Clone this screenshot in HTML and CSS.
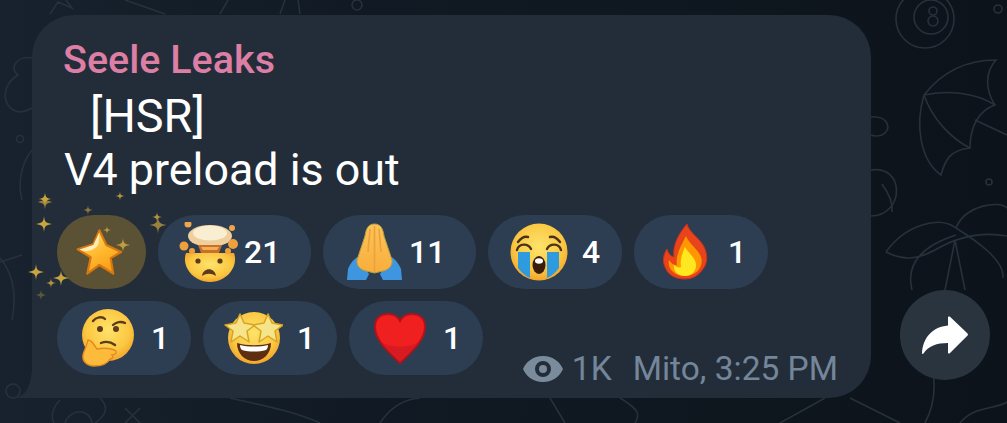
FILE: index.html
```html
<!DOCTYPE html>
<html lang="en">
<head>
    <meta charset="UTF-8">
    <meta name="viewport" content="width=device-width, initial-scale=1.0">
    <title>Seele Leaks</title>
    <link rel="stylesheet" href="styles.css">
</head>
<body>
    <!-- chat wallpaper doodles -->
    <svg class="doodles" viewBox="0 0 1007 423" aria-hidden="true">
        <g fill="none" stroke="#27313b" stroke-width="1.6">
            <circle cx="925" cy="19" r="29"/><circle cx="931" cy="17" r="17"/>
            <circle cx="933" cy="11" r="4"/><circle cx="933" cy="21" r="5"/>
            <circle cx="998" cy="9" r="4"/><circle cx="989" cy="182" r="3"/>
            <path d="M924 95C945 68 970 60 996 60C985 72 985 90 995 105C980 110 970 125 970 148C950 150 945 160 941 175C920 160 915 125 924 95Z"/>
            <path d="M924 95C945 90 975 92 995 105M924 95C932 118 950 138 970 148M975 120L1007 135"/>
            <path d="M871 117C888 115 893 130 882 135Q876 137 871 135M871 170C905 165 905 215 871 216M882 184C890 195 893 205 892 212"/>
            <path d="M886 252C905 225 940 215 956 228C965 205 1000 200 1007 208M886 252C905 262 920 258 935 250C960 235 985 232 1007 236M956 228C975 240 1005 260 1003 278M912 290C905 262 925 245 956 235M955 240L945 290M955 240L965 290"/>
            <path d="M32 58C18 55 8 68 18 75C6 82 2 95 8 105C15 115 25 112 32 108"/>
            <path d="M32 150C20 165 18 185 22 200"/><circle cx="20" cy="139" r="3.5"/>
            <path d="M0 258C10 270 18 290 12 320M0 262L22 255"/>
            <path d="M50 14L58 2L72 8L66 0M125 0L165 14M220 14L228 0M280 14L285 0M300 14L298 0"/>
            <circle cx="357" cy="5" r="5"/>
            <circle cx="13" cy="391" r="7"/>
            <path d="M60 400C50 410 52 420 54 423M100 398C110 408 105 416 95 423M65 423C70 408 90 408 92 423M125 408L140 423M140 408L125 423"/>
            <path d="M550 398L565 423M620 398C640 410 640 415 635 423M780 423L825 398M850 398L900 423"/>
            <path d="M920 340C935 360 940 395 925 423M960 423C975 405 995 410 1007 402"/>
            <path d="M230 398C260 405 290 410 320 423M380 423Q395 400 420 398"/>
        </g>
    </svg>

    <main class="row">
        <article class="bubble">
            <h2 class="author">Seele Leaks</h2>
            <p class="line line-indent">[HSR]</p>
            <p class="line">V4 preload is out</p>

            <div class="reactions">
                <div class="pill pill-active">
                    <svg class="emoji" viewBox="0 0 60 60"><use href="#e-star"/></svg>
                </div>
                <div class="pill">
                    <svg class="emoji" viewBox="0 0 60 60"><use href="#e-head"/></svg>
                    <span class="count">21</span>
                </div>
                <div class="pill">
                    <svg class="emoji" viewBox="0 0 60 60"><use href="#e-pray"/></svg>
                    <span class="count">11</span>
                </div>
                <div class="pill">
                    <svg class="emoji" viewBox="0 0 60 60"><use href="#e-cry"/></svg>
                    <span class="count count-single">4</span>
                </div>
                <div class="pill">
                    <svg class="emoji" viewBox="0 0 60 60"><use href="#e-fire"/></svg>
                    <span class="count count-single">1</span>
                </div>
                <div class="pill">
                    <svg class="emoji" viewBox="0 0 60 60"><use href="#e-think"/></svg>
                    <span class="count count-single">1</span>
                </div>
                <div class="pill">
                    <svg class="emoji" viewBox="0 0 60 60"><use href="#e-stars"/></svg>
                    <span class="count count-single">1</span>
                </div>
                <div class="pill">
                    <svg class="emoji" viewBox="0 0 60 60"><use href="#e-heart"/></svg>
                    <span class="count count-single">1</span>
                </div>
            </div>

            <div class="meta">
                <svg class="eye" viewBox="0 0 40 26"><path fill-rule="evenodd" fill="#7a8b9c" d="M20 0C30 0 37 6 40 13C37 20 30 26 20 26C10 26 3 20 0 13C3 6 10 0 20 0ZM20 5A8 8 0 1 0 20 21A8 8 0 1 0 20 5ZM20 9A4 4 0 1 1 20 17A4 4 0 1 1 20 9Z"/></svg>
                <span class="views">1K</span>
                <span>Mito, 3:25 PM</span>
            </div>

            <!-- sparkle effect round the paid star reaction -->
            <svg class="sparkles" viewBox="0 0 140 120" aria-hidden="true">
                <g fill="#c9a53f">
                    <use href="#spark" transform="translate(25 17) scale(.65)"/>
                    <use href="#spark" transform="translate(25 20) scale(.75)" opacity=".7"/>
                    <use href="#spark" transform="translate(24 42) scale(.8)"/>
                    <use href="#spark" transform="translate(100 14) scale(.45)" opacity=".85"/>
                    <use href="#spark" transform="translate(68 28) scale(.5)" opacity=".6"/>
                    <use href="#spark" transform="translate(137 35) scale(.5)" opacity=".85"/>
                    <use href="#spark" transform="translate(138 43) scale(.85)" opacity=".7"/>
                    <use href="#spark" transform="translate(16 90) scale(.8)"/>
                    <use href="#spark" transform="translate(31 101) scale(.5)" opacity=".85"/>
                    <use href="#spark" transform="translate(41 96) scale(.8)"/>
                    <use href="#spark" transform="translate(21 113) scale(.55)" opacity=".35"/>
                    <use href="#spark" transform="translate(87 48) scale(.4)" opacity=".85"/>
                    <use href="#spark" transform="translate(103 63) scale(.7)" opacity=".9"/>
                </g>
            </svg>
        </article>

        <button class="share" aria-label="Forward">
            <svg viewBox="0 0 46 38" width="46" height="38"><path fill="#fff" d="M26 1.5C26 .5 27 0 28 .8L45.3 17.2C46.2 18 46.2 19 45.3 19.8L28 37C27 38 26 37.5 26 36.5V27C15 27 6 30 1.5 37.5C.8 38.3 0 38 0 37C1 22 10 11 26 9.5Z"/></svg>
        </button>
    </main>

    <!-- emoji drawings -->
    <svg class="sprite" aria-hidden="true">
        <defs>
            <path id="spark" d="M0-10C.8-3 1.5-1.5 10 0C1.5 1.5 .8 3 0 10C-.8 3-1.5 1.5-10 0C-1.5-1.5-.8-3 0-10Z"/>
            <radialGradient id="face" cx=".5" cy=".4" r=".6">
                <stop offset="0" stop-color="#fde36b"/><stop offset=".7" stop-color="#fbc741"/><stop offset="1" stop-color="#f3a52c"/>
            </radialGradient>
            <linearGradient id="starFill" x1=".2" y1=".1" x2=".7" y2="1">
                <stop offset="0" stop-color="#ffd76a"/><stop offset=".5" stop-color="#ffb92e"/><stop offset="1" stop-color="#f79a14"/>
            </linearGradient>
            <linearGradient id="palm" x1="0" y1="0" x2="0" y2="1">
                <stop offset="0" stop-color="#fbc557"/><stop offset="1" stop-color="#f8ae3c"/>
            </linearGradient>

            <g id="e-star">
                <path fill="url(#starFill)" stroke="#d8760f" stroke-width="2.5" stroke-linejoin="round" d="M27 5L35 22L52 30L40 37L43 55L27 45L13 55L17 36L2 27L20 21Z"/>
                <path fill="#ffedb5" d="M4 27L20 22L27 7L26 20C24 28 12 31 4 27Z"/>
            </g>

            <g id="e-head">
                <path fill="url(#face)" d="M8 31H56C58 36 57 42 55 46C50 56 40 60 32 60C24 60 14 56 9 46C7 42 6 36 8 31Z"/>
                <ellipse cx="32" cy="14" rx="22" ry="11" fill="#efcf9c"/>
                <ellipse cx="32" cy="11" rx="17" ry="7.5" fill="#f9edd2"/>
                <path fill="#c8702e" d="M20 23H44L41 31H23Z"/>
                <path fill="#f2b04e" d="M23 25H41L39 28H25Z"/>
                <circle cx="10" cy="2" r="3.5" fill="#eda64c"/><circle cx="54" cy="6" r="3" fill="#eda64c"/>
                <circle cx="6" cy="24" r="4.5" fill="#eda03c"/><circle cx="55" cy="22" r="5" fill="#eda03c"/>
                <circle cx="14" cy="29" r="3" fill="#eda03c"/><circle cx="50" cy="29" r="3" fill="#eda03c"/>
                <circle cx="20" cy="39" r="2.6" fill="#5d3a1a"/><circle cx="42" cy="39" r="2.6" fill="#5d3a1a"/>
                <path fill="#5d3a1a" d="M24 54C25 45 37 45 38 54C33 51 29 51 24 54Z"/>
            </g>

            <g id="e-pray">
                <path fill="#3f96e0" d="M4 58L5 47C8 40 12 36 15 35L26 52L23 58ZM59 58L58 47C55 40 51 36 48 35L37 52L40 58Z"/>
                <path fill="url(#palm)" stroke="#b89c3f" stroke-width="1" d="M31.5 2C25 2 23 7 22 14L14 38C13 44 18 48 23 49L31.5 51L40 49C45 48 50 44 49 38L41 14C40 7 38 2 31.5 2Z"/>
                <path stroke="#ee9f3e" stroke-width="1.6" fill="none" d="M31.5 4V50M27 7L25 30M36 7L38 30"/>
            </g>

            <g id="e-cry">
                <circle cx="31" cy="30" r="28.5" fill="url(#face)"/>
                <path fill="#2f9bdf" d="M10 30H22V56C17 54 13 50 10 46ZM39 30H51V46C48 50 44 54 39 56Z"/>
                <path fill="none" stroke="#4a3218" stroke-width="2.4" stroke-linecap="round" d="M9 28C11 21 20 21 23 27M39 27C42 21 51 21 53 28M10 20C13 16 17 14 20 15M42 15C45 14 49 16 52 20"/>
                <ellipse cx="31" cy="43" rx="6.5" ry="9" fill="#3b1d0d"/>
                <ellipse cx="31" cy="39" rx="4" ry="2.8" fill="#fff"/>
            </g>

            <g id="e-fire">
                <path fill="#e8431b" stroke="#c9301a" stroke-width="1" d="M33 2C35 10 44 15 49 23C54 31 54 41 49 47C44 54 38 57 31 57C23 57 15 54 12 47C8 40 9 33 13 27C14 31 16 34 20 35C18 24 25 11 33 2Z"/>
                <path fill="#ff9800" d="M32 14C35 22 44 27 47 35C50 44 43 54 31 54C20 54 13 46 15 38C17 41 19 43 23 43C21 34 27 24 32 14Z"/>
                <path fill="#ffe81f" d="M31 25C34 31 42 36 42 43C42 50 37 54 31 54C24 54 19 49 20 43C22 45 25 46 27 45C26 38 28 32 31 25Z"/>
            </g>

            <g id="e-think">
                <circle cx="31" cy="27" r="26" fill="url(#face)"/>
                <path fill="none" stroke="#5d3a1a" stroke-width="2.4" stroke-linecap="round" d="M16 13C19 9 25 8 28 11M36 17C39 14 44 13 48 15M24 35C29 33 34 34 38 37"/>
                <circle cx="23" cy="21" r="3" fill="#5d3a1a"/><circle cx="39" cy="21" r="3" fill="#5d3a1a"/>
                <path fill="#fdbb3c" stroke="#e5891c" stroke-width="1.4" d="M11 32C15 32 17 37 20 41C26 40 34 40 39 43C40 45 38 47 35 47C37 49 35 51 33 51C31 55 25 58 17 58C10 58 5 53 6 47C7 42 10 38 11 32Z"/>
            </g>

            <g id="e-stars">
                <circle cx="31" cy="30" r="26" fill="url(#face)"/>
                <path fill="#5d2f10" d="M14 35C24 38 38 38 48 35C48 46 40 53 31 53C22 53 14 46 14 35Z"/>
                <path fill="#fff" d="M17 37C25 39 37 39 45 37C45 40 44 41 43 42C36 44 26 44 19 42C18 41 17 40 17 37Z"/>
                <path fill="#f6e48a" stroke="#d9a520" stroke-width="1.5" stroke-linejoin="round" d="M17 6L21 15L32 17L24 23L26 34L17 28L8 34L10 23L2 17L13 15Z"/>
                <path fill="#f6e48a" stroke="#d9a520" stroke-width="1.5" stroke-linejoin="round" d="M45 6L49 15L60 17L52 23L54 34L45 28L36 34L38 23L30 17L41 15Z"/>
            </g>

            <g id="e-heart">
                <path fill="#f02020" stroke="#b3121a" stroke-width="2" d="M31 55C21 45 6 33 6 19C6 10 12 6 19 6C25 6 29 9 31 13C33 9 37 6 43 6C50 6 56 10 56 19C56 33 41 45 31 55Z"/>
                <path fill="#d81b22" d="M31 53C25 46 18 41 13 34C20 40 42 40 49 34C44 41 37 46 31 53Z"/>
            </g>
        </defs>
    </svg>
</body>
</html>
```

FILE: styles.css
```css
html, body {
    margin: 0;
    height: 100%;
}
body {
    width: 1007px;
    height: 423px;
    overflow: hidden;
    position: relative;
    font-family: Roboto, "Liberation Sans", sans-serif;
    background: linear-gradient(90deg, #17222e 0%, #111a24 35%, #0c131a 100%);
}
.doodles {
    position: absolute;
    inset: 0;
    width: 1007px;
    height: 423px;
}
.sprite {
    position: absolute;
    width: 0;
    height: 0;
}
.row {
    position: relative;
    display: flex;
    align-items: flex-end;
    gap: 29px;
    padding: 15px 0 0 32px;
}
.bubble {
    position: relative;
    box-sizing: border-box;
    width: 839px;
    height: 383px;
    padding: 17px 25px 0 25px;
    background-color: #232d39;
    border-radius: 42px 42px 42px 0;
}
/* little tail at the bottom left */
.bubble::before {
    content: "";
    position: absolute;
    left: -17px;
    bottom: 0;
    width: 17px;
    height: 28px;
    background: radial-gradient(ellipse 17px 28px at 0 0, transparent 97%, #232d39 100%);
}
.author {
    margin: 0 0 0 6px;
    font-size: 39.5px;
    line-height: 55px;
    font-weight: 500;
    color: #dd7ea5;
}
.line {
    margin: 0 0 0 7px;
    font-size: 44.8px;
    line-height: 54px;
    color: #fff;
}
.line-indent {
    margin-top: 2px;
    padding-left: 26px;
    font-size: 46.8px;
}
.reactions {
    display: flex;
    flex-wrap: wrap;
    gap: 12px;
    width: 760px;
    margin-top: 18px;
}
.pill {
    display: flex;
    align-items: center;
    gap: 6px;
    box-sizing: border-box;
    height: 74px;
    padding: 0 22px 0 20px;
    background-color: #2d3e53;
    border-radius: 37px;
}
.pill-active {
    width: 89px;
    padding: 0;
    justify-content: center;
    background-color: #5b5236;
}
.pill-active .emoji {
    width: 52px;
    height: 52px;
}
.emoji {
    flex: none;
    width: 60px;
    height: 60px;
}
.count {
    width: 36px;
    padding-right: 9px;
    font-size: 32px;
    font-weight: 500;
    color: #fff;
}
.count-single {
    width: 18px;
    padding: 0 0 0 8px;
}
.meta {
    position: absolute;
    right: 33px;
    bottom: 10px;
    display: flex;
    align-items: center;
    font-size: 33.5px;
    color: #74869a;
}
.eye {
    width: 40px;
    height: 26px;
    margin-right: 9px;
}
.views {
    margin-right: 21px;
}
.sparkles {
    position: absolute;
    left: -12px;
    top: 167px;
    width: 140px;
    height: 120px;
    overflow: visible;
}
.share {
    display: flex;
    align-items: center;
    justify-content: center;
    width: 90px;
    height: 90px;
    margin-bottom: 18px;
    padding: 0;
    border: none;
    border-radius: 50%;
    background-color: #2a343f;
}
```
